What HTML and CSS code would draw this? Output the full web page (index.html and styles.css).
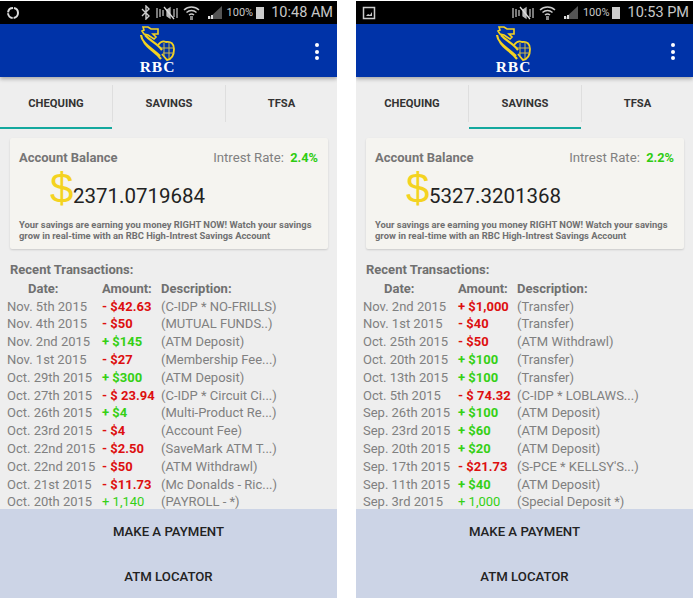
FILE: index.html
```html
<!DOCTYPE html>
<html lang="en">
  <head>
    <meta charset="UTF-8" />
    <meta name="viewport" content="width=device-width, initial-scale=1.0" />
    <title>RBC Banking</title>
    <link rel="stylesheet" href="styles.css">
  </head>
  <body>
    <!-- Chequing phone -->
    <div class="phone">
      <div class="status">
        <svg class="status-left" width="14" height="14" viewBox="0 0 14 14"><circle cx="7" cy="7" r="5" fill="none" stroke="#ddd" stroke-width="2" stroke-dasharray="7 1"/></svg>
        <div class="status-right">
          <svg width="10" height="15" viewBox="0 0 10 15"><path d="M1 4l7 7-3 3V1l3 3-7 7" fill="none" stroke="#ccc" stroke-width="1.4"/></svg>
          <svg class="gap-s" width="22" height="14" viewBox="0 0 22 14"><path d="M1 2v10M4 3v8M7 4v6M11 4l3-2v10l-3-2zM18 3v8M21 2v10" stroke="#bbb" stroke-width="1.3" fill="#bbb"/><path d="M8 1l10 12" stroke="#ddd" stroke-width="1.3"/></svg>
          <svg class="gap-s" width="17" height="17" viewBox="0 0 17 17"><path d="M1 6a11 11 0 0 1 15 0M3.500 8.500a7.500 7.500 0 0 1 10 0M6 11a4 4 0 0 1 5 0" fill="none" stroke="#ccc" stroke-width="1.500"/><path d="M7 12h3v4H7z" fill="#888"/></svg>
          <svg class="gap-m" width="16" height="15" viewBox="0 0 16 15"><path d="M15 1v13H1z" fill="#555"/><path d="M1 11h2v3H1zM4 10h2v4H4z" fill="#ddd"/></svg>
          <span class="battery-pct">100%</span>
          <span class="battery"></span>
          <span class="clock">10:48 AM</span>
        </div>
      </div>
      <div class="appbar">
        <div class="logo">
          <svg width="37" height="37" viewBox="0 0 37 37"><path d="M4 2h5l3 2h7v5h-5l3 3-2 2-6-4-4-1-2-3 2-1z" fill="none" stroke="#f4d320" stroke-width="1.600"/><path d="M2 10c1 9 11 13 19 21M5 17c4 7 11 9 17 17M6 10c5 6 12 8 17 15" fill="none" stroke="#f4d320" stroke-width="2.200"/><path d="M19 20c3-4 6-4 8-3 5-1 8 2 8 7 0 6-2 10-7 11l-5-6" fill="none" stroke="#f4d320" stroke-width="1.800"/><path d="M25 18v14M30 17v16M22 23h13M24 28h11" stroke="#cdbb4a" stroke-width="1"/></svg>
          <span class="logo-text">RBC</span>
        </div>
        <div class="menu"><span></span><span></span><span></span></div>
      </div>
      <div class="tabs">
        <div class="tab tab-active">CHEQUING</div>
        <div class="tab">SAVINGS</div>
        <div class="tab">TFSA</div>
      </div>
      <div class="card">
        <div class="card-top">
          <span class="card-title">Account Balance</span>
          <span class="rate">Intrest Rate: <b>2.4%</b></span>
        </div>
        <div class="balance"><span class="dollar">$</span>2371.0719684</div>
        <p class="promo">Your savings are earning you money RIGHT NOW! Watch your savings grow in real-time with an RBC High-Intrest Savings Account</p>
      </div>
      <div class="recent">
        <h3>Recent Transactions:</h3>
        <div class="tx-table">
          <b class="th-date">Date:</b><b>Amount:</b><b>Description:</b>
          <span>Nov. 5th 2015</span><b class="neg">- $42.63</b><span>(C-IDP * NO-FRILLS)</span>
          <span>Nov. 4th 2015</span><b class="neg">- $50</b><span>(MUTUAL FUNDS..)</span>
          <span>Nov. 2nd 2015</span><b class="pos">+ $145</b><span>(ATM Deposit)</span>
          <span>Nov. 1st 2015</span><b class="neg">- $27</b><span>(Membership Fee...)</span>
          <span>Oct. 29th 2015</span><b class="pos">+ $300</b><span>(ATM Deposit)</span>
          <span>Oct. 27th 2015</span><b class="neg">- $ 23.94</b><span>(C-IDP * Circuit Ci...)</span>
          <span>Oct. 26th 2015</span><b class="pos">+ $4</b><span>(Multi-Product Re...)</span>
          <span>Oct. 23rd 2015</span><b class="neg">- $4</b><span>(Account Fee)</span>
          <span>Oct. 22nd 2015</span><b class="neg">- $2.50</b><span>(SaveMark ATM T...)</span>
          <span>Oct. 22nd 2015</span><b class="neg">- $50</b><span>(ATM Withdrawl)</span>
          <span>Oct. 21st 2015</span><b class="neg">- $11.73</b><span>(Mc Donalds - Ric...)</span>
          <span>Oct. 20th 2015</span><span class="pos">+ 1,140</span><span>(PAYROLL - *)</span>
        </div>
      </div>
      <div class="actions">
        <div class="action">MAKE A PAYMENT</div>
        <div class="action">ATM LOCATOR</div>
      </div>
    </div>

    <!-- Savings phone -->
    <div class="phone">
      <div class="status">
        <svg class="status-left" width="14" height="14" viewBox="0 0 14 14"><path d="M1.500 1.500h11v11h-11z" fill="none" stroke="#ccc" stroke-width="1.500"/><path d="M4 10l2-2 2 1 2-3v4z" fill="#ccc"/></svg>
        <div class="status-right">
          <svg width="22" height="14" viewBox="0 0 22 14"><path d="M1 2v10M4 3v8M7 4v6M11 4l3-2v10l-3-2zM18 3v8M21 2v10" stroke="#bbb" stroke-width="1.3" fill="#bbb"/><path d="M8 1l10 12" stroke="#ddd" stroke-width="1.3"/></svg>
          <svg class="gap-s" width="17" height="17" viewBox="0 0 17 17"><path d="M1 6a11 11 0 0 1 15 0M3.500 8.500a7.500 7.500 0 0 1 10 0M6 11a4 4 0 0 1 5 0" fill="none" stroke="#ccc" stroke-width="1.500"/><path d="M7 12h3v4H7z" fill="#888"/></svg>
          <svg class="gap-m" width="16" height="15" viewBox="0 0 16 15"><path d="M15 1v13H1z" fill="#555"/><path d="M1 11h2v3H1zM4 10h2v4H4z" fill="#ddd"/></svg>
          <span class="battery-pct">100%</span>
          <span class="battery"></span>
          <span class="clock">10:53 PM</span>
        </div>
      </div>
      <div class="appbar">
        <div class="logo">
          <svg width="37" height="37" viewBox="0 0 37 37"><path d="M4 2h5l3 2h7v5h-5l3 3-2 2-6-4-4-1-2-3 2-1z" fill="none" stroke="#f4d320" stroke-width="1.600"/><path d="M2 10c1 9 11 13 19 21M5 17c4 7 11 9 17 17M6 10c5 6 12 8 17 15" fill="none" stroke="#f4d320" stroke-width="2.200"/><path d="M19 20c3-4 6-4 8-3 5-1 8 2 8 7 0 6-2 10-7 11l-5-6" fill="none" stroke="#f4d320" stroke-width="1.800"/><path d="M25 18v14M30 17v16M22 23h13M24 28h11" stroke="#cdbb4a" stroke-width="1"/></svg>
          <span class="logo-text">RBC</span>
        </div>
        <div class="menu"><span></span><span></span><span></span></div>
      </div>
      <div class="tabs">
        <div class="tab">CHEQUING</div>
        <div class="tab tab-active">SAVINGS</div>
        <div class="tab">TFSA</div>
      </div>
      <div class="card">
        <div class="card-top">
          <span class="card-title">Account Balance</span>
          <span class="rate">Intrest Rate: <b>2.2%</b></span>
        </div>
        <div class="balance"><span class="dollar">$</span>5327.3201368</div>
        <p class="promo">Your savings are earning you money RIGHT NOW! Watch your savings grow in real-time with an RBC High-Intrest Savings Account</p>
      </div>
      <div class="recent">
        <h3>Recent Transactions:</h3>
        <div class="tx-table">
          <b class="th-date">Date:</b><b>Amount:</b><b>Description:</b>
          <span>Nov. 2nd 2015</span><b class="neg">+ $1,000</b><span>(Transfer)</span>
          <span>Nov. 1st 2015</span><b class="neg">- $40</b><span>(Transfer)</span>
          <span>Oct. 25th 2015</span><b class="neg">- $50</b><span>(ATM Withdrawl)</span>
          <span>Oct. 20th 2015</span><b class="pos">+ $100</b><span>(Transfer)</span>
          <span>Oct. 13th 2015</span><b class="pos">+ $100</b><span>(Transfer)</span>
          <span>Oct. 5th 2015</span><b class="neg">- $ 74.32</b><span>(C-IDP * LOBLAWS...)</span>
          <span>Sep. 26th 2015</span><b class="pos">+ $100</b><span>(ATM Deposit)</span>
          <span>Sep. 23rd 2015</span><b class="pos">+ $60</b><span>(ATM Deposit)</span>
          <span>Sep. 20th 2015</span><b class="pos">+ $20</b><span>(ATM Deposit)</span>
          <span>Sep. 17th 2015</span><b class="neg">- $21.73</b><span>(S-PCE * KELLSY'S...)</span>
          <span>Sep. 11th 2015</span><b class="pos">+ $40</b><span>(ATM Deposit)</span>
          <span>Sep. 3rd 2015</span><span class="pos">+ 1,000</span><span>(Special Deposit *)</span>
        </div>
      </div>
      <div class="actions">
        <div class="action">MAKE A PAYMENT</div>
        <div class="action">ATM LOCATOR</div>
      </div>
    </div>
  </body>
</html>
```

FILE: styles.css
```css
html, body {
  height: 100%;
}
body {
  background-color: white;
  display: flex;
  gap: 19px;
  margin: 0;
  padding-top: 1px;
  box-sizing: border-box;
  overflow: hidden;
  font-family: Roboto, "Liberation Sans", sans-serif;
}

.phone {
  width: 337px;
  height: 597px;
  background-color: #eeeeee;
  display: flex;
  flex-direction: column;
  overflow: hidden;
}

/* status bar */
.status {
  height: 23px;
  flex: none;
  background-color: black;
  color: #c8c8c8;
  display: flex;
  align-items: center;
  justify-content: space-between;
  padding: 0 4px 0 6px;
}
.status-right {
  display: flex;
  align-items: center;
}
.gap-s {
  margin-left: 5px;
}
.gap-m {
  margin-left: 7px;
}
.battery-pct {
  font-size: 11px;
  margin-left: 4px;
}
.battery {
  width: 8px;
  height: 12px;
  background-color: #ccc;
  margin-left: 3px;
}
.clock {
  font-size: 14.500px;
  margin-left: 7px;
}

/* app bar */
.appbar {
  height: 53px;
  flex: none;
  background-color: #0033a8;
  box-shadow: 0 2px 4px rgba(0, 0, 0, 0.3);
  display: flex;
  justify-content: center;
  position: relative;
  z-index: 1;
}
.logo {
  display: flex;
  flex-direction: column;
  align-items: center;
  margin-right: 22px;
  padding-top: 1px;
}
.logo-text {
  color: white;
  font-family: "Liberation Serif", serif;
  font-weight: bold;
  font-size: 15.500px;
  line-height: 12px;
  letter-spacing: 1px;
  margin-top: -1px;
}
.menu {
  position: absolute;
  right: 18px;
  top: 19px;
  display: flex;
  flex-direction: column;
  gap: 2.500px;
}
.menu span {
  width: 4px;
  height: 4px;
  border-radius: 50%;
  background-color: white;
}

/* tabs */
.tabs {
  height: 52px;
  flex: none;
  display: grid;
  grid-template-columns: 113px 113px 111px;
  background-color: #eeeeee;
}
.tab {
  display: flex;
  align-items: center;
  justify-content: center;
  font-size: 11.200px;
  font-weight: bold;
  color: #333;
  margin-top: 8px;
  height: 37px;
  border-right: 1px solid #dedede;
  position: relative;
}
.tab:last-child {
  border-right: none;
}
.tab-active::after {
  content: "";
  position: absolute;
  left: 0;
  right: 0;
  bottom: -7px;
  height: 2px;
  background-color: #13a89e;
}

/* balance card */
.card {
  flex: none;
  height: 111px;
  box-sizing: border-box;
  margin: 9px 9px 0 10px;
  padding: 12px 10px 0 9px;
  background-color: #f5f4f0;
  border-radius: 2px;
  box-shadow: 0 1px 2px rgba(0, 0, 0, 0.15);
}
.card-top {
  display: flex;
  justify-content: space-between;
  align-items: baseline;
}
.card-title {
  font-size: 13px;
  font-weight: bold;
  color: #757575;
}
.rate {
  font-size: 13.200px;
  color: #808080;
}
.rate b {
  color: #2ecc12;
  font-size: 12.800px;
  margin-left: 3px;
}
.balance {
  height: 50px;
  font-size: 20.500px;
  color: #222;
  padding-left: 31px;
  display: flex;
  align-items: baseline;
  line-height: 1;
  margin-top: 3px;
}
.dollar {
  font-family: "Liberation Sans", sans-serif;
  font-size: 42px;
  color: #f4d320;
  width: 23px;
}
.promo {
  margin: 1px 0 0;
  font-size: 9.400px;
  line-height: 11px;
  font-weight: bold;
  color: #707070;
}

/* transactions */
.recent {
  flex: 1;
  min-height: 0;
  overflow: hidden;
  padding: 13px 0 0 7px;
}
.recent h3 {
  margin: 0 0 0 3px;
  font-size: 13px;
  line-height: 15px;
  color: #707070;
}
.tx-table {
  display: grid;
  grid-template-columns: 95px 59px 1fr;
  grid-auto-rows: 17.800px;
  align-items: center;
  margin-top: 3px;
  font-size: 13px;
  line-height: 14px;
  color: #808080;
  white-space: nowrap;
}
.tx-table b {
  color: #707070;
}
.tx-table .th-date {
  padding-left: 21px;
}
.tx-table .neg {
  color: #dd0f0f;
}
.tx-table .pos {
  color: #35d015;
}

/* bottom buttons */
.actions {
  flex: none;
  height: 89px;
  background-color: #ccd4e6;
}
.action {
  height: 45px;
  display: flex;
  align-items: center;
  justify-content: center;
  font-size: 13.200px;
  font-weight: 500;
  color: #222;
}
```
